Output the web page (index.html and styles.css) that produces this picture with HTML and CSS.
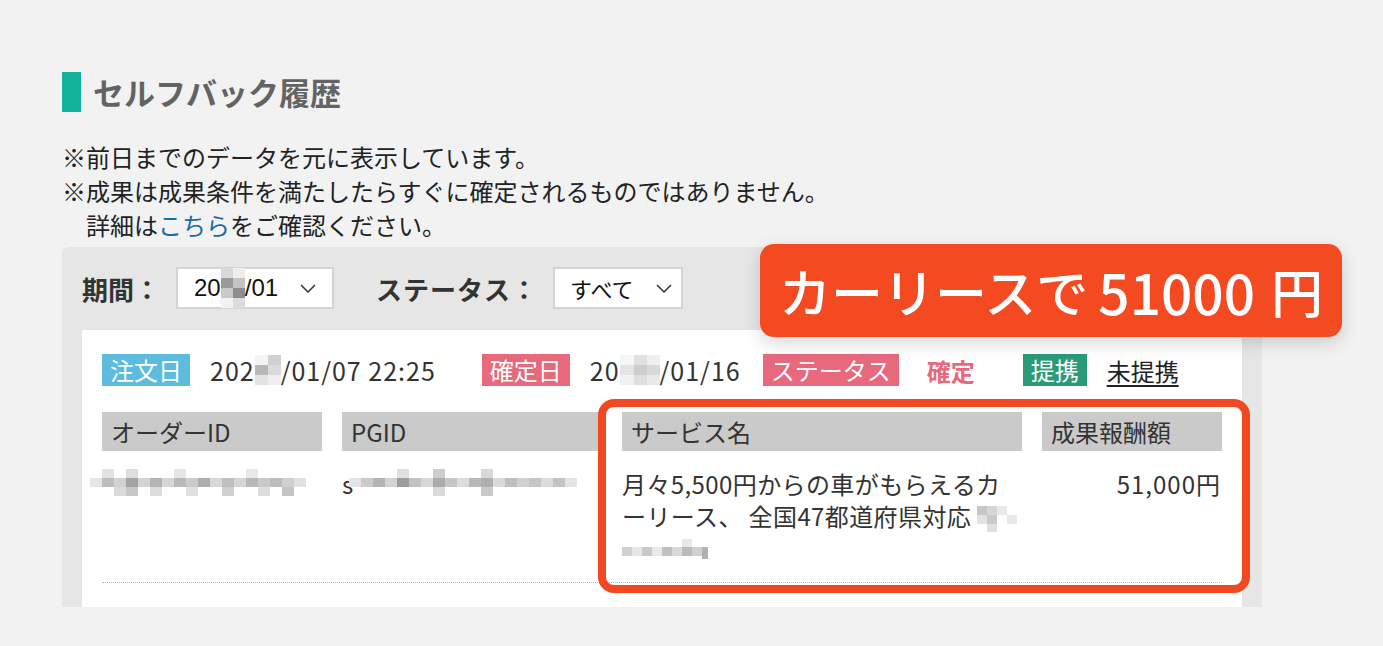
FILE: index.html
```html
<!DOCTYPE html>
<html lang="ja">

<head>
  <meta charset="UTF-8">
  <meta name="viewport" content="width=device-width, initial-scale=1.0">
  <title>セルフバック履歴</title>
  <link rel="stylesheet" href="styles.css">
</head>

<body>

  <div class="page">
    <h2 class="title">セルフバック履歴</h2>

    <div class="notes">
      <p>※前日までのデータを元に表示しています。</p>
      <p>※成果は成果条件を満たしたらすぐに確定されるものではありません。</p>
      <p class="indent">詳細は<a href="#">こちら</a>をご確認ください。</p>
    </div>

    <div class="history">
      <div class="filters">
        <label class="filter-label">期間：</label>
        <div class="select-box period">
          <span class="num">20<svg class="mosaic" width="24" height="40" viewBox="0 0 24 40">
              <rect x="0" y="0" width="12" height="10" fill="#d9d9d9" />
              <rect x="12" y="0" width="12" height="10" fill="#eeeeee" />
              <rect x="0" y="10" width="12" height="10" fill="#9a9a9a" />
              <rect x="12" y="10" width="12" height="10" fill="#c4c4c4" />
              <rect x="0" y="20" width="12" height="10" fill="#c9c9c9" />
              <rect x="12" y="20" width="12" height="10" fill="#8e8e8e" />
              <rect x="0" y="30" width="12" height="10" fill="#f2f2f2" />
              <rect x="12" y="30" width="12" height="10" fill="#dcdcdc" />
            </svg>/01</span>
          <svg class="chevron" width="16" height="9" viewBox="0 0 16 9">
            <path d="M1 1l7 7 7-7" fill="none" stroke="#333" stroke-width="1.5" />
          </svg>
        </div>
        <label class="filter-label status-label">ステータス：</label>
        <div class="select-box status">
          <span>すべて</span>
          <svg class="chevron" width="16" height="9" viewBox="0 0 16 9">
            <path d="M1 1l7 7 7-7" fill="none" stroke="#333" stroke-width="1.5" />
          </svg>
        </div>
      </div>

      <div class="record">
        <div class="meta">
          <div class="meta-item order">
            <span class="tag tag-blue">注文日</span>
            <span class="value">202<svg class="mosaic" width="26" height="30" viewBox="0 0 26 30">
                <rect x="0" y="0" width="13" height="10" fill="#f4f4f4" />
                <rect x="13" y="0" width="13" height="10" fill="#d0d0d0" />
                <rect x="0" y="10" width="13" height="10" fill="#b8b8b8" />
                <rect x="13" y="10" width="13" height="10" fill="#dadada" />
                <rect x="0" y="20" width="13" height="10" fill="#e3e3e3" />
                <rect x="13" y="20" width="13" height="10" fill="#efefef" />
              </svg>/01/07 22:25</span>
          </div>
          <div class="meta-item fixed">
            <span class="tag tag-pink">確定日</span>
            <span class="value">20<svg class="mosaic" width="40" height="30" viewBox="0 0 40 30">
                <rect x="0" y="0" width="14" height="10" fill="#f6f6f6" />
                <rect x="14" y="0" width="13" height="10" fill="#e0e0e0" />
                <rect x="27" y="0" width="13" height="10" fill="#f0f0f0" />
                <rect x="0" y="10" width="14" height="10" fill="#e4e4e4" />
                <rect x="14" y="10" width="13" height="10" fill="#cdcdcd" />
                <rect x="27" y="10" width="13" height="10" fill="#d8d8d8" />
                <rect x="0" y="20" width="14" height="10" fill="#f1f1f1" />
                <rect x="14" y="20" width="13" height="10" fill="#dedede" />
                <rect x="27" y="20" width="13" height="10" fill="#e9e9e9" />
              </svg>/01/16</span>
          </div>
          <div class="meta-item state">
            <span class="tag tag-pink">ステータス</span>
            <span class="state-value">確定</span>
          </div>
          <div class="meta-item partner">
            <span class="tag tag-green">提携</span>
            <a class="partner-link" href="#">未提携</a>
          </div>
        </div>

        <div class="detail">
          <div class="head">オーダーID</div>
          <div class="head">PGID</div>
          <div class="head">サービス名</div>
          <div class="head">成果報酬額</div>

          <div class="cell">
            <svg class="mosaic id-mosaic" width="216" height="36" viewBox="0 0 216 36">
              <rect x="0" y="9" width="12" height="9" fill="#e6e6e6" />
              <rect x="12" y="0" width="12" height="9" fill="#e2e2e2" />
              <rect x="12" y="9" width="12" height="9" fill="#bdbdbd" />
              <rect x="24" y="9" width="12" height="9" fill="#d2d2d2" />
              <rect x="24" y="18" width="12" height="9" fill="#dadada" />
              <rect x="36" y="0" width="12" height="9" fill="#dedede" />
              <rect x="36" y="9" width="12" height="9" fill="#a4a4a4" />
              <rect x="36" y="18" width="12" height="9" fill="#c6c6c6" />
              <rect x="48" y="9" width="12" height="9" fill="#d4d4d4" />
              <rect x="60" y="9" width="12" height="9" fill="#b4b4b4" />
              <rect x="60" y="18" width="12" height="9" fill="#dcdcdc" />
              <rect x="72" y="9" width="12" height="9" fill="#d6d6d6" />
              <rect x="84" y="0" width="12" height="9" fill="#e6e6e6" />
              <rect x="84" y="9" width="12" height="9" fill="#b9b9b9" />
              <rect x="96" y="9" width="12" height="9" fill="#cbcbcb" />
              <rect x="96" y="18" width="12" height="9" fill="#dfdfdf" />
              <rect x="108" y="9" width="12" height="9" fill="#adadad" />
              <rect x="120" y="9" width="12" height="9" fill="#d8d8d8" />
              <rect x="132" y="9" width="12" height="9" fill="#bfbfbf" />
              <rect x="132" y="18" width="12" height="9" fill="#cfcfcf" />
              <rect x="144" y="9" width="12" height="9" fill="#d5d5d5" />
              <rect x="156" y="0" width="12" height="9" fill="#e8e8e8" />
              <rect x="156" y="9" width="12" height="9" fill="#b8b8b8" />
              <rect x="168" y="9" width="12" height="9" fill="#c9c9c9" />
              <rect x="168" y="18" width="12" height="9" fill="#dddddd" />
              <rect x="180" y="9" width="12" height="9" fill="#bcbcbc" />
              <rect x="192" y="9" width="12" height="9" fill="#d0d0d0" />
              <rect x="192" y="18" width="12" height="9" fill="#c4c4c4" />
              <rect x="204" y="9" width="12" height="9" fill="#e1e1e1" />
            </svg>
          </div>
          <div class="cell">s<svg class="mosaic pg-mosaic" width="232" height="36" viewBox="0 0 232 36">
              <rect x="0" y="9" width="12" height="9" fill="#e4e4e4" />
              <rect x="12" y="9" width="12" height="9" fill="#cbcbcb" />
              <rect x="24" y="9" width="12" height="9" fill="#b4b4b4" />
              <rect x="36" y="9" width="12" height="9" fill="#d3d3d3" />
              <rect x="48" y="9" width="12" height="9" fill="#9c9c9c" />
              <rect x="48" y="0" width="12" height="9" fill="#e0e0e0" />
              <rect x="60" y="9" width="12" height="9" fill="#c2c2c2" />
              <rect x="72" y="9" width="12" height="9" fill="#d7d7d7" />
              <rect x="84" y="0" width="12" height="9" fill="#cdcdcd" />
              <rect x="84" y="9" width="12" height="9" fill="#ababab" />
              <rect x="84" y="18" width="12" height="9" fill="#dadada" />
              <rect x="96" y="9" width="12" height="9" fill="#c6c6c6" />
              <rect x="108" y="9" width="12" height="9" fill="#dcdcdc" />
              <rect x="120" y="9" width="12" height="9" fill="#b8b8b8" />
              <rect x="132" y="0" width="12" height="9" fill="#d8d8d8" />
              <rect x="132" y="9" width="12" height="9" fill="#afafaf" />
              <rect x="132" y="18" width="12" height="9" fill="#c9c9c9" />
              <rect x="144" y="9" width="12" height="9" fill="#dadada" />
              <rect x="156" y="9" width="12" height="9" fill="#bebebe" />
              <rect x="168" y="9" width="12" height="9" fill="#d0d0d0" />
              <rect x="180" y="9" width="12" height="9" fill="#c5c5c5" />
              <rect x="192" y="9" width="12" height="9" fill="#dcdcdc" />
              <rect x="204" y="9" width="12" height="9" fill="#c3c3c3" />
              <rect x="216" y="9" width="12" height="9" fill="#e4e4e4" />
            </svg></div>
          <div class="cell service">月々5,500円からの車がもらえるカーリース、 全国47都道府県対応 <svg class="mosaic" width="40" height="26" viewBox="0 0 40 26">
              <rect x="0" y="0" width="10" height="9" fill="#c6c6c6" />
              <rect x="10" y="0" width="10" height="9" fill="#d6d6d6" />
              <rect x="20" y="0" width="10" height="9" fill="#e8e8e8" />
              <rect x="0" y="9" width="10" height="9" fill="#e2e2e2" />
              <rect x="10" y="9" width="10" height="9" fill="#c9c9c9" />
              <rect x="30" y="9" width="10" height="9" fill="#e9e9e9" />
              <rect x="10" y="18" width="10" height="8" fill="#dfdfdf" />
            </svg>
            <svg class="mosaic" width="90" height="26" viewBox="0 0 90 26">
              <rect x="0" y="8" width="10" height="9" fill="#cfcfcf" />
              <rect x="10" y="8" width="10" height="9" fill="#e6e6e6" />
              <rect x="20" y="8" width="10" height="9" fill="#c9c9c9" />
              <rect x="30" y="8" width="10" height="9" fill="#e9e9e9" />
              <rect x="40" y="8" width="10" height="9" fill="#c0c0c0" />
              <rect x="50" y="8" width="10" height="9" fill="#dadada" />
              <rect x="60" y="8" width="10" height="9" fill="#bababa" />
              <rect x="70" y="8" width="10" height="9" fill="#d0d0d0" />
              <rect x="60" y="0" width="10" height="8" fill="#e8e8e8" />
              <rect x="80" y="8" width="6" height="12" fill="#b0b0b0" />
            </svg></div>
          <div class="cell amount">51,000円</div>
        </div>

        <!-- annotation frame around the service / amount columns -->
        <div class="highlight"></div>
      </div>

      <div class="callout">カーリースで<span class="callout-num">51000</span>円</div>
    </div>
  </div>

</body>

</html>
```

FILE: styles.css
```css
* {
  margin: 0;
  padding: 0;
  box-sizing: border-box;
}

html,
body {
  width: 100%;
  height: 100%;
}

body {
  background-color: #f2f2f2;
  color: #333;
  font-family: "Noto Sans CJK JP", "Noto Sans", sans-serif;
  overflow: hidden;
}

.page {
  padding: 72px 0 0 62px;
  width: 1262px;
}

/* section heading with the green mark */
.title {
  display: flex;
  align-items: center;
  gap: 12px;
  height: 40px;
  font-size: 31px;
  font-weight: 700;
  color: #636363;
  line-height: 40px;
}

.title::before {
  content: "";
  width: 19px;
  height: 40px;
  background-color: #13b29b;
}

.notes {
  margin-top: 28px;
  font-size: 24px;
  line-height: 34px;
  color: #222;
}

.notes .indent {
  padding-left: 24px;
}

.notes a {
  color: #1b6aa0;
  text-decoration: none;
}

/* grey panel holding the filters and the records */
.history {
  position: relative;
  margin-top: 5px;
  padding: 20px 20px 0;
  background-color: #e6e6e6;
  border-radius: 6px 0 0 0;
}

.filters {
  display: flex;
  align-items: center;
  height: 42px;
}

.filter-label {
  font-size: 26px;
  font-weight: 700;
  color: #333;
  margin-right: 16px;
}

.status-label {
  margin-left: 42px;
  margin-right: 15px;
  letter-spacing: 1px;
}

.select-box {
  display: flex;
  align-items: center;
  justify-content: space-between;
  height: 42px;
  padding: 0 9px 0 15px;
  background-color: #fff;
  border: 2px solid #d4d4d4;
  font-size: 22px;
  color: #111;
}

.select-box.period {
  width: 158px;
  padding-left: 16px;
  padding-right: 16px;
}

.select-box.status {
  width: 130px;
}

.num {
  display: flex;
  align-items: center;
  font-family: "Liberation Sans", sans-serif;
  font-size: 24px;
}

.chevron {
  flex-shrink: 0;
}

.mosaic {
  display: inline-block;
  vertical-align: middle;
}

/* white record card */
.record {
  position: relative;
  margin-top: 21px;
  padding: 24px 20px 24px;
  background-color: #fff;
}

.meta {
  display: flex;
  align-items: center;
  height: 32px;
  font-size: 24px;
}

.meta-item {
  display: flex;
  align-items: center;
  gap: 20px;
}

.meta-item.order {
  margin-right: 46px;
}

.meta-item.fixed {
  margin-right: 22px;
}

.meta-item.state {
  gap: 28px;
  margin-right: 48px;
}

.tag {
  height: 32px;
  line-height: 32px;
  padding: 0 8px;
  color: #fff;
}

.tag-blue {
  background-color: #5bbcde;
}

.tag-pink {
  background-color: #e8687c;
}

.tag-green {
  background-color: #2a9a79;
}

.value {
  display: flex;
  align-items: center;
  font-size: 25px;
  letter-spacing: 1px;
  color: #333;
}

.state-value {
  font-weight: 700;
  color: #e8687c;
}

.partner-link {
  color: #222;
  text-decoration: underline;
  text-underline-offset: 4px;
}

/* order details table */
.detail {
  display: grid;
  grid-template-columns: 220px 260px 400px 180px;
  column-gap: 20px;
  margin-top: 26px;
  border-bottom: 1px dotted #bdbdbd;
}

.head {
  height: 39px;
  line-height: 39px;
  padding: 0 9px;
  background-color: #cacaca;
  font-size: 24px;
  color: #333;
}

.cell {
  padding: 17px 0;
  font-size: 24px;
  line-height: 32px;
  color: #333;
}

.service {
  letter-spacing: 0.4px;
}

.id-mosaic {
  margin-left: -12px;
}

.pg-mosaic {
  margin-left: -4px;
}

.amount {
  text-align: right;
  letter-spacing: 1px;
  padding-right: 1px;
}

.highlight {
  position: absolute;
  left: 516px;
  top: 69px;
  width: 652px;
  height: 194px;
  border: 8px solid #f24822;
  border-radius: 16px;
}

/* orange label over the panel */
.callout {
  position: absolute;
  left: 698px;
  top: -3px;
  width: 582px;
  height: 93px;
  display: flex;
  align-items: center;
  justify-content: center;
  background-color: #f34a22;
  border-radius: 14px;
  box-shadow: 0 6px 18px rgba(0, 0, 0, 0.16);
  color: #fff;
  font-size: 52px;
  font-weight: 500;
}

.callout-num {
  margin: 0 16px 0 10px;
  font-size: 55px;
}
```
